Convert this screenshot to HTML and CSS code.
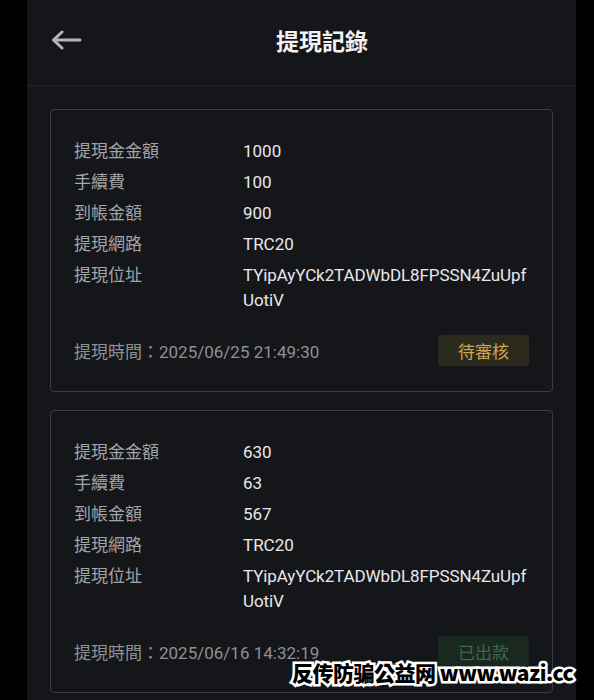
FILE: index.html
```html
<!DOCTYPE html>
<html lang="zh-Hant">
<head>
  <meta charset="UTF-8" />
  <meta name="viewport" content="width=device-width, initial-scale=1.0"/>
  <title>提現記錄</title>
  <link rel="stylesheet" href="styles.css">
</head>
<body>
  <div class="app">
    <div class="header">
      <div class="back">
        <svg width="32" height="20" viewBox="0 0 32 20">
          <path d="M30 10H4M12 2L3.5 10L12 18" fill="none" stroke="#b4b5b9" stroke-width="3" stroke-linecap="round" stroke-linejoin="round"/>
        </svg>
      </div>
      <h1 class="title">提現記錄</h1>
    </div>

    <div class="list">
      <div class="card">
        <div class="row"><span class="label">提現金金額</span><span class="value">1000</span></div>
        <div class="row"><span class="label">手續費</span><span class="value">100</span></div>
        <div class="row"><span class="label">到帳金額</span><span class="value">900</span></div>
        <div class="row"><span class="label">提現網路</span><span class="value">TRC20</span></div>
        <div class="row"><span class="label">提現位址</span><span class="value addr">TYipAyYCk2TADWbDL8FPSSN4ZuUpfUotiV</span></div>
        <div class="foot">
          <span class="time">提現時間：2025/06/25 21:49:30</span>
          <span class="badge pending">待審核</span>
        </div>
      </div>

      <div class="card">
        <div class="row"><span class="label">提現金金額</span><span class="value">630</span></div>
        <div class="row"><span class="label">手續費</span><span class="value">63</span></div>
        <div class="row"><span class="label">到帳金額</span><span class="value">567</span></div>
        <div class="row"><span class="label">提現網路</span><span class="value">TRC20</span></div>
        <div class="row"><span class="label">提現位址</span><span class="value addr">TYipAyYCk2TADWbDL8FPSSN4ZuUpfUotiV</span></div>
        <div class="foot">
          <span class="time">提現時間：2025/06/16 14:32:19</span>
          <span class="badge paid">已出款</span>
        </div>
      </div>
    </div>
  </div>

  <div class="watermark">反传防骗公益网 www.wazi.cc</div>
</body>
</html>
```

FILE: styles.css
```css
body {
  margin: 0;
  padding: 0;
  background: #000;
  font-family: Roboto, "Noto Sans CJK TC", sans-serif;
  height: 700px;
  overflow: hidden;
  position: relative;
}
.app {
  width: 549px;
  margin-left: 27px;
  min-height: 700px;
  background: #15161a;
}
.header {
  height: 85px;
  display: flex;
  align-items: center;
  border-bottom: 1px solid #25262b;
  padding-left: 23px;
}
.back {
  width: 32px;
  height: 20px;
  margin-top: -6px;
}
.title {
  flex: 1;
  margin: -6px 0 0 0;
  text-align: center;
  color: #f2f2f2;
  font-size: 23px;
  font-weight: 700;
  padding-right: 14px;
  font-family: "Noto Sans CJK TC", sans-serif;
}
.list {
  padding: 23px 23px 0;
  display: flex;
  flex-direction: column;
  gap: 18px;
}
.card {
  border: 1px solid #3b3c41;
  border-radius: 4px;
  padding: 29px 23px 25px;
}
.row {
  display: flex;
  font-size: 17px;
  line-height: 25px;
  margin-bottom: 6px;
}
.label {
  width: 169px;
  flex-shrink: 0;
  color: #a3a4a8;
}
.value {
  color: #e8e8ea;
  flex: 1;
}
.addr {
  word-break: break-all;
  letter-spacing: -0.1px;
}
.foot {
  display: flex;
  align-items: center;
  justify-content: space-between;
  margin-top: 22px;
}
.time {
  color: #8f9094;
  font-size: 17px;
}
.badge {
  width: 91px;
  height: 31px;
  line-height: 31px;
  text-align: center;
  border-radius: 4px;
  font-size: 17px;
  font-family: "Noto Sans CJK TC", sans-serif;
}
.pending {
  background: #2c291d;
  color: #c9a84e;
}
.paid {
  background: #1b2820;
  color: #3c6a48;
}
.watermark {
  position: absolute;
  left: 292px;
  top: 657px;
  font-family: "Noto Sans CJK SC", sans-serif;
  font-weight: 900;
  font-size: 21px;
  color: #000;
  letter-spacing: -0.5px;
  -webkit-text-stroke: 5px #fff;
  paint-order: stroke fill;
}
```
